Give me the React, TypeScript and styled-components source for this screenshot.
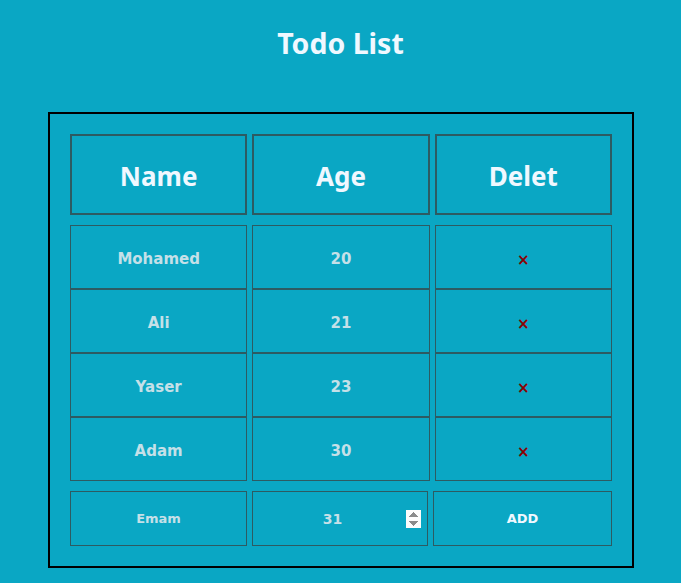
import React, { useState } from "react";
import styled, { createGlobalStyle } from "styled-components";

const Global = createGlobalStyle`
  html, body { margin: 0; padding: 0; background: #0aa7c4; }
  body { font-family: "Noto Sans", "Open Sans", sans-serif; }
  * { box-sizing: border-box; }
`;

const Page = styled.div`
  width: 681px;
  min-height: 583px;
  background: #0aa7c4;
  padding-top: 25px;
  display: flex;
  flex-direction: column;
  align-items: center;
`;

const Title = styled.h1`
  margin: 0;
  font-family: "Noto Sans", sans-serif;
  font-weight: 700;
  font-size: 28.5px;
  line-height: 36px;
  color: #f0f8ff;
`;

const Board = styled.div`
  margin-top: 51px;
  margin-left: 1px;
  width: 586px;
  border: 2px solid #000;
  padding: 20px;
  display: flex;
  flex-direction: column;
`;

const Row = styled.div<{ $gapTop?: number }>`
  display: grid;
  grid-template-columns: repeat(3, 1fr);
  column-gap: 5px;
  margin-top: ${(p) => p.$gapTop ?? 0}px;
`;

const HeadCell = styled.div`
  height: 81px;
  border: 2px solid #2d5b62;
  display: flex;
  align-items: center;
  justify-content: center;
  font-family: "Noto Sans", sans-serif;
  font-weight: 700;
  font-size: 26px;
  color: #f0f8ff;
  padding-top: 2px;
`;

const Cell = styled.div`
  height: 64px;
  border: 1px solid #2d5b62;
  display: flex;
  align-items: center;
  justify-content: center;
  font-family: "DejaVu Sans", Verdana, sans-serif;
  font-weight: 700;
  font-size: 15px;
  color: #c5e0e8;
  padding-top: 3px;
`;

const DeleteMark = styled.span`
  color: #8b0000;
  font-family: "DejaVu Sans", sans-serif;
  font-size: 15px;
  font-weight: 700;
  cursor: pointer;
  margin-top: 2px;
`;

const FormRow = styled.div`
  display: grid;
  grid-template-columns: 177px 176px 179px;
  column-gap: 5px;
  margin-top: 10px;
`;

const TextInput = styled.input`
  height: 55px;
  width: 100%;
  border: 1px solid #2d5b62;
  background: transparent;
  text-align: center;
  font-family: "DejaVu Sans", Verdana, sans-serif;
  font-weight: 700;
  font-size: 13px;
  color: #c5e0e8;
  outline: none;
  padding: 0 6px;
`;

const NumberInput = styled(TextInput)`
  font-size: 14px;
  padding: 0 6px;
  caret-color: #e6f4f8;
  &::-webkit-inner-spin-button {
    opacity: 1;
    height: 18px;
  }
`;

const AddButton = styled.button`
  height: 55px;
  border: 1px solid #2d5b62;
  background: transparent;
  font-family: "DejaVu Sans", Verdana, sans-serif;
  font-weight: 700;
  font-size: 13px;
  color: #f0f8ff;
  cursor: pointer;
`;

type Person = { name: string; age: number };

export default function App() {
  const [people, setPeople] = useState<Person[]>([
    { name: "Mohamed", age: 20 },
    { name: "Ali", age: 21 },
    { name: "Yaser", age: 23 },
    { name: "Adam", age: 30 },
  ]);
  const [name, setName] = useState("Emam");
  const [age, setAge] = useState("31");

  return (
    <Page>
      <Global />
      <Title>Todo List</Title>
      <Board>
        <Row>
          <HeadCell>Name</HeadCell>
          <HeadCell>Age</HeadCell>
          <HeadCell>Delet</HeadCell>
        </Row>
        {people.map((p, i) => (
          <Row key={p.name + i} $gapTop={i === 0 ? 10 : 0}>
            <Cell>{p.name}</Cell>
            <Cell>{p.age}</Cell>
            <Cell>
              <DeleteMark
                onClick={() => setPeople(people.filter((_, j) => j !== i))}
              >
                ×
              </DeleteMark>
            </Cell>
          </Row>
        ))}
        <FormRow>
          <TextInput value={name} onChange={(e) => setName(e.target.value)} />
          <NumberInput
            type="number"
            autoFocus
            value={age}
            onChange={(e) => setAge(e.target.value)}
          />
          <AddButton
            onClick={() =>
              name && setPeople([...people, { name, age: Number(age) }])
            }
          >
            ADD
          </AddButton>
        </FormRow>
      </Board>
    </Page>
  );
}
